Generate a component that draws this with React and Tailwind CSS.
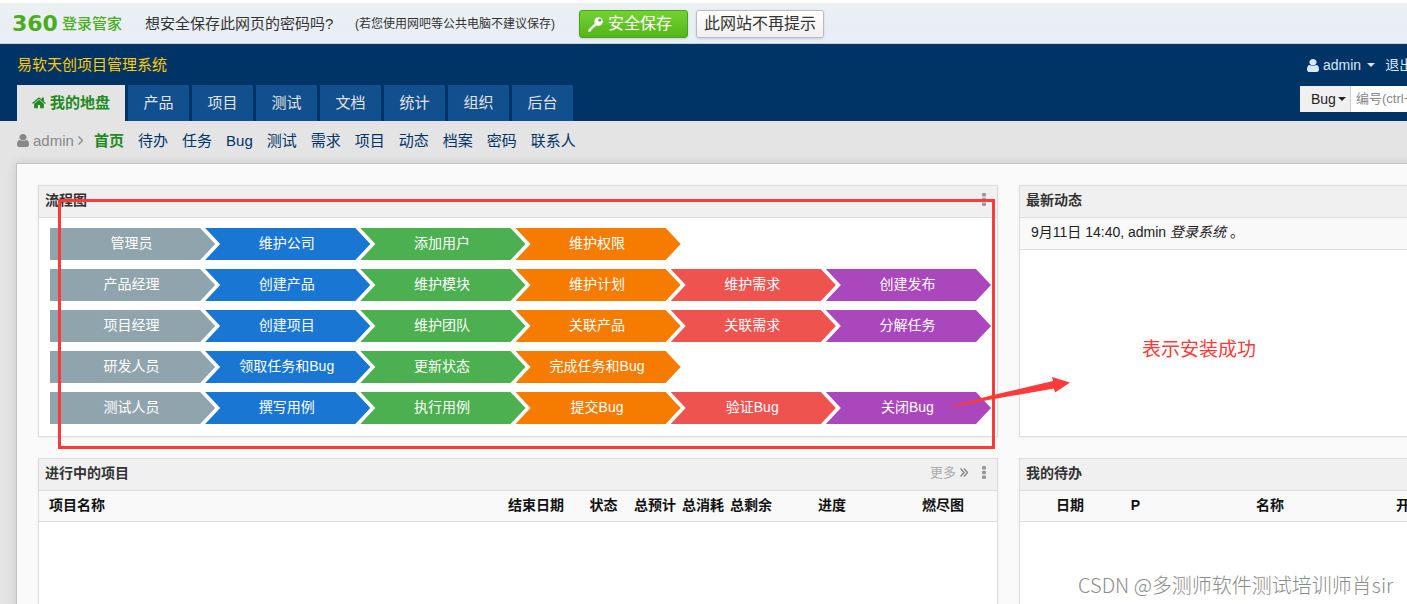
/**
 * App.jsx — "my dashboard" page of the project management system.
 *
 * Top:    password manager bar of the browser.
 * Header: company name, main tabs, user menu and quick search.
 * Body:   process flow, latest activity, running projects, my todos.
 */

// ─── Data ────────────────────────────────────────────────────────────────────

const TABS = ['产品', '项目', '测试', '文档', '统计', '组织', '后台']

const SUB_MENU = ['待办', '任务', 'Bug', '测试', '需求', '项目', '动态', '档案', '密码', '联系人']

const FLOW_ROWS = [
  ['管理员', '维护公司', '添加用户', '维护权限'],
  ['产品经理', '创建产品', '维护模块', '维护计划', '维护需求', '创建发布'],
  ['项目经理', '创建项目', '维护团队', '关联产品', '关联需求', '分解任务'],
  ['研发人员', '领取任务和Bug', '更新状态', '完成任务和Bug'],
  ['测试人员', '撰写用例', '执行用例', '提交Bug', '验证Bug', '关闭Bug'],
]

const STEP_COLORS = [
  'bg-[#90a4ae]',
  'bg-[#1976d2]',
  'bg-[#4caf50]',
  'bg-[#f57c00]',
  'bg-[#ef5350]',
  'bg-[#ab47bc]',
]

const PROJECT_COLS = [
  { label: '项目名称', cls: 'pl-[10px] text-left' },
  { label: '结束日期', cls: 'w-[80px]' },
  { label: '状态', cls: 'w-[55px]' },
  { label: '总预计', cls: 'w-[48px]' },
  { label: '总消耗', cls: 'w-[48px]' },
  { label: '总剩余', cls: 'w-[48px]' },
  { label: '进度', cls: 'w-[114px]' },
  { label: '燃尽图', cls: 'w-[108px]' },
]

const TODO_COLS = [
  { label: '日期', cls: 'w-[100px]' },
  { label: 'P', cls: 'w-[31px]' },
  { label: '名称', cls: '' },
  { label: '开始', cls: 'w-[42px]' },
  { label: '结束', cls: 'w-[67px]' },
]

// ─── Icons ───────────────────────────────────────────────────────────────────

function UserIcon() {
  return (
    <svg viewBox="0 0 1280 1536" preserveAspectRatio="none" className="h-[13px] w-3 shrink-0" fill="currentColor" aria-hidden="true">
      <path d="M1280 1271q0 109-62.500 187t-150.500 78h-854q-88 0-150.500-78t-62.500-187q0-85 8.500-160.500t31.500-152 58.500-131 94-89 134.500-34.500q131 128 313 128t313-128q76 0 134.500 34.500t94 89 58.500 131 31.500 152 8.500 160.500zM1024 384q0 159-112.500 271.500t-271.500 112.500-271.500-112.500-112.500-271.500 112.500-271.500 271.500-112.500 271.500 112.500 112.500 271.500z" />
    </svg>
  )
}

function HomeIcon() {
  return (
    <svg viewBox="0 200 1664 1400" className="h-3 w-[14px]" fill="currentColor" aria-hidden="true">
      <path d="M1408 992v480q0 26-19 45t-45 19h-384v-384h-256v384h-384q-26 0-45-19t-19-45v-480q0-1 .5-3t.5-3l575-474 575 474q1 2 1 6zM1631 923l-62 74q-8 9-21 11h-3q-13 0-21-7l-692-577-692 577q-12 8-24 7-13-2-21-11l-62-74q-8-10-7-23.500t11-21.500l719-599q32-26 76-26t76 26l244 204v-195q0-14 9-23t23-9h192q14 0 23 9t9 23v408l219 182q10 8 11 21.500t-7 23.500z" />
    </svg>
  )
}

function KeyIcon() {
  return (
    <svg viewBox="0 0 17 17" className="h-[17px] w-[17px]" aria-hidden="true">
      <path
        d="M11.500 0.800a4.700 4.700 0 0 1 0 9.400c-.7 0-1.400-.1-2-.4l-2 2-1.300.1-.1 1.400-1.300.1-.2 1.300-1.500 1.400H1v-2.500l6.300-6.200A4.700 4.700 0 0 1 11.500.8z"
        fill="#f4f8f0"
        stroke="#6d9f52"
        strokeWidth="0.6"
      />
      <circle cx="12.800" cy="4.200" r="1.400" fill="#55a829" />
    </svg>
  )
}

function Caret() {
  return (
    <svg viewBox="0 0 8 4" className="h-1 w-2 shrink-0" fill="currentColor" aria-hidden="true">
      <path d="M0 0h8L4 4z" />
    </svg>
  )
}

function DotsIcon() {
  return (
    <svg viewBox="0 0 4 13" className="h-[13px] w-1" fill="currentColor" aria-hidden="true">
      <rect width="4" height="3.500" rx="0.8" />
      <rect y="4.700" width="4" height="3.500" rx="0.8" />
      <rect y="9.400" width="4" height="3.500" rx="0.8" />
    </svg>
  )
}

// ─── Browser password bar ────────────────────────────────────────────────────

function PasswordBar() {
  return (
    <div className="border-t-[3px] border-white">
      <div className="flex h-[41px] items-center border-b border-[#c5d5e3] bg-linear-to-b from-[#ebf0f2] to-[#e9eef8] pt-[2px] pl-3 text-[#333]">
        <div className="flex w-[133px] items-center gap-1 text-[#4aad1c]">
          <span className="font-['DejaVu_Sans'] text-[22px] leading-5 font-bold">360</span>
          <span className="text-[15px] font-medium">登录管家</span>
        </div>
        <span className="w-[210px] text-[15px]">想安全保存此网页的密码吗?</span>
        <span className="w-[224px] text-[12px]">(若您使用网吧等公共电脑不建议保存)</span>
        <button
          type="button"
          className="flex h-7 w-[109px] items-center gap-1 rounded-[3px] border border-[#48a31c] bg-linear-to-b from-[#74d232] to-[#54b618] pl-[7px] text-[16px] text-white shadow-sm"
        >
          <KeyIcon />
          安全保存
        </button>
        <button
          type="button"
          className="ml-2 h-7 w-[128px] rounded-[3px] border border-[#bbb] bg-linear-to-b from-white to-[#f0f0f0] text-[16px] leading-6 shadow-sm"
        >
          此网站不再提示
        </button>
      </div>
    </div>
  )
}

// ─── Header ──────────────────────────────────────────────────────────────────

function Header() {
  return (
    <header className="flex justify-between bg-[#036] px-[17px] text-[15px]">
      <div>
        <h1 className="flex h-[41px] items-center text-[#fc0]">易软天创项目管理系统</h1>
        <nav className="flex h-9 gap-[3px]">
          <a href="#my" className="flex w-[108px] items-center justify-center gap-1 bg-[#e4e4e4] font-bold text-[#228a22]">
            <HomeIcon />
            我的地盘
          </a>
          {TABS.map(tab => (
            <a
              key={tab}
              href="#tab"
              className="flex w-[61px] items-center justify-center bg-[#114f8e] text-[#e4e4e4] hover:bg-[#1a5fa3]"
            >
              {tab}
            </a>
          ))}
        </nav>
      </div>

      {/* User menu and quick search */}
      <div className="w-[220px] text-[14px]">
        <div className="flex h-[42px] items-center gap-[10px] pl-[7px] text-[#d5e9f8]">
          <button type="button" className="flex items-center gap-1">
            <UserIcon />
            admin
            <span className="ml-[2px]"><Caret /></span>
          </button>
          <a href="#logout">退出</a>
          <a href="#about">关于</a>
        </div>
        <form className="flex h-[26px]">
          <button
            type="button"
            className="flex w-[51px] shrink-0 items-center gap-[2px] border-r border-[#ccc] bg-[#f0f0f0] pl-[11px] text-[#222]"
          >
            Bug
            <Caret />
          </button>
          <input
            type="text"
            aria-label="搜索编号"
            placeholder="编号(ctrl+g)"
            className="w-full min-w-0 bg-white px-[5px] text-[13px] placeholder:text-[#888]"
          />
        </form>
      </div>
    </header>
  )
}

function SubMenu() {
  return (
    <nav className="flex h-[42px] items-center px-[17px] pb-[3px] text-[15px] text-[#036]">
      <div className="flex w-[77px] items-center gap-1 text-[#888]">
        <UserIcon />
        admin
        <svg viewBox="0 0 5 9" className="h-[9px] w-[5px] shrink-0" fill="none" stroke="currentColor" strokeWidth="1.300" aria-hidden="true">
          <path d="M.5.5l4 4-4 4" />
        </svg>
      </div>
      <div className="flex gap-[14px]">
        <a href="#home" className="font-bold text-[#228a22]">首页</a>
        {SUB_MENU.map(item => (
          <a key={item} href="#menu">{item}</a>
        ))}
      </div>
    </nav>
  )
}

// ─── Panels ──────────────────────────────────────────────────────────────────

function Panel({ title, actions, children }) {
  return (
    <section className="min-h-[252px] border border-[#ddd] bg-white shadow-[0_1px_3px_rgba(0,0,0,0.06)]">
      <div className="flex h-8 items-center justify-between border-b border-[#ddd] bg-[#f0f0f0] pr-[11px] pb-1 pl-[6px]">
        <h2 className="font-bold text-[#333]">{title}</h2>
        <div className="flex items-center gap-[14px] text-[#999]">{actions}</div>
      </div>
      {children}
    </section>
  )
}

function MenuButton() {
  return (
    <button type="button" aria-label="更多操作" className="block">
      <DotsIcon />
    </button>
  )
}

function FlowStep({ label, index }) {
  // The first step has a flat left side, the others are notched
  const shape = index === 0
    ? '[clip-path:polygon(0_0,calc(100%-15px)_0,100%_50%,calc(100%-15px)_100%,0_100%)]'
    : '[clip-path:polygon(0_0,calc(100%-15px)_0,100%_50%,calc(100%-15px)_100%,0_100%,15px_50%)]'
  return (
    <a
      href="#step"
      className={`-mr-[10px] flex h-8 items-center justify-center pr-[2px] pb-[2px] text-white ${STEP_COLORS[index]} ${shape}`}
    >
      {label}
    </a>
  )
}

function FlowChart() {
  return (
    <div className="flex flex-col gap-[9px] pt-[10px] pr-4 pb-3 pl-[11px]">
      {FLOW_ROWS.map(row => (
        <div key={row[0]} className="grid grid-cols-6">
          {row.map((label, i) => (
            <FlowStep key={label} label={label} index={i} />
          ))}
        </div>
      ))}
    </div>
  )
}

function HeadTable({ cols }) {
  return (
    <table className="w-full table-fixed">
      <thead>
        <tr className="h-[30px] border-b border-[#ddd] bg-[#f9f9f9] text-[#111]">
          {cols.map(col => (
            <th key={col.label} className={`p-0 pb-[2px] font-bold whitespace-nowrap ${col.cls}`}>
              {col.label}
            </th>
          ))}
        </tr>
      </thead>
    </table>
  )
}

// ─── Red marks over the page ─────────────────────────────────────────────────

function Annotations() {
  return (
    <div className="pointer-events-none absolute inset-0 text-[#fc3a3a]">
      <div className="absolute top-[199px] left-[58px] h-[250px] w-[937px] border-[3px] border-[#fc3a3a]" />
      <svg viewBox="0 0 120 32" className="absolute top-[376px] left-[951px] h-8 w-[120px]" fill="currentColor" aria-hidden="true">
        <path d="M1 29.800L40 19.500 102 5 101 1 119 6.500 104 16.500 103 12.500 40 23.500 1 31z" />
      </svg>
      <p className="absolute top-[336px] left-[1142px] text-[19px] leading-7">表示安装成功</p>
    </div>
  )
}

// ─── Page root ───────────────────────────────────────────────────────────────

export default function App() {
  return (
    <div className="h-screen overflow-hidden bg-[#e4e4e4] font-['Liberation_Sans','Noto_Sans_CJK_SC',sans-serif] text-[14px] leading-5 text-[#222]">
      <div className="relative min-w-[1537px]">
        <PasswordBar />
        <Header />
        <SubMenu />

        <main className="mx-4 grid grid-cols-[2fr_1fr] gap-[21px] border border-[#c4c4c4] bg-[#fafafa] p-[21px] shadow-[0_0_10px_rgba(0,0,0,0.12)]">
          <Panel title="流程图" actions={<MenuButton />}>
            <FlowChart />
          </Panel>

          <Panel title="最新动态">
            <p className="h-8 border-b border-[#ddd] bg-[#f9f9f9] pt-1 pl-[11px]">
              9月11日 14:40, admin <em>登录系统</em> 。
            </p>
          </Panel>

          <Panel
            title="进行中的项目"
            actions={
              <>
                <a href="#more" className="flex items-center gap-1 text-[13px] text-[#aaa]">
                  更多
                  <svg viewBox="0 0 8 9" className="h-[9px] w-2 text-[#888]" fill="none" stroke="currentColor" strokeWidth="1.500" aria-hidden="true">
                    <path d="M.5.5l3.500 4-3.500 4M4 .5l3.500 4-3.500 4" />
                  </svg>
                </a>
                <MenuButton />
              </>
            }
          >
            <HeadTable cols={PROJECT_COLS} />
          </Panel>

          <Panel title="我的待办">
            <HeadTable cols={TODO_COLS} />
          </Panel>
        </main>

        <Annotations />
        <p className="pointer-events-none absolute top-[571px] left-[1078px] font-['Noto_Sans_CJK_SC',sans-serif] text-[20px] leading-7 font-light whitespace-nowrap text-[#8c8c8c]">
          CSDN @多测师软件测试培训师肖sir
        </p>
      </div>
    </div>
  )
}
